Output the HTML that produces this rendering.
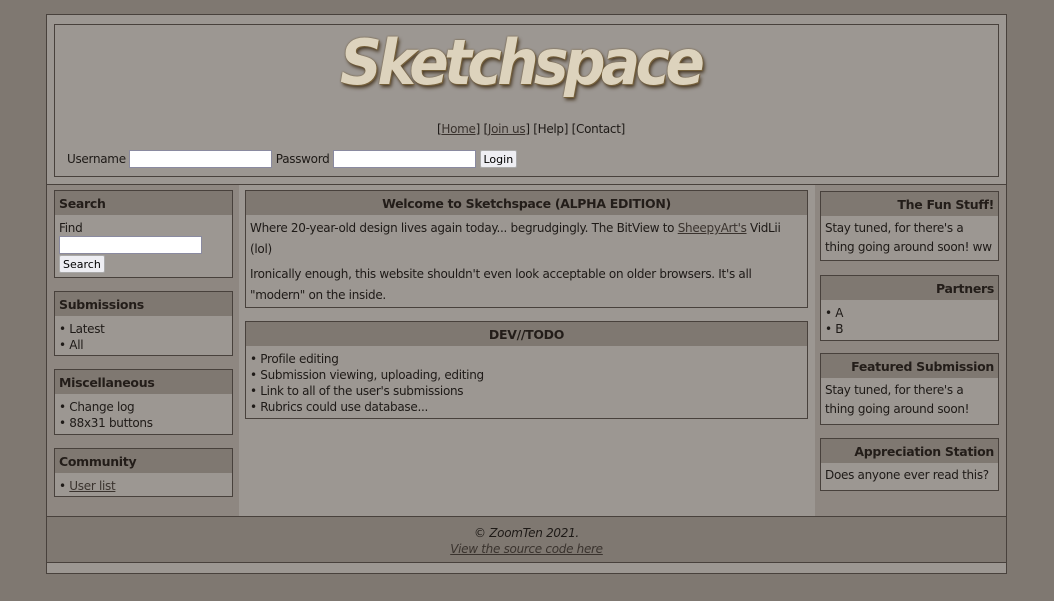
<!DOCTYPE html><html><head><style>
*{margin:0;padding:0;box-sizing:border-box}
body{width:1054px;height:601px;background:#7f7871;font-family:"DejaVu Sans","Liberation Sans",sans-serif;font-size:12px;color:#1e1a17;position:relative;overflow:hidden;letter-spacing:-0.3px}
.a{position:absolute}
.box{position:absolute;border:1px solid #48413c;background:#9c9792}
.t{background:#7f7871;height:24px;line-height:26px;font-weight:bold;font-size:12.5px;padding:0 4px;letter-spacing:-0.3px;color:#231d19}
.r .t{text-align:right}
.c{padding:5px 4px 3px;line-height:16px}
ul{list-style:none}
li:before{content:"• "}
a{color:#3a332e}
input{border:1px solid #8a8aa0;background:#fff;height:18px}
button{border:1px solid #aaa;border-radius:2px;background:#eeeef3;font-size:11px;height:18px;padding:0 3px;font-family:inherit}
</style></head><body>
<div class="a" style="left:46px;top:14px;width:961px;height:560px;border:1px solid #48413c;background:#9c9792"></div>
<div class="a" style="left:47px;top:184px;width:192px;height:332px;background:#8e8781;border-top:1px solid #48413c"></div>
<div class="a" style="left:815px;top:184px;width:191px;height:332px;background:#8e8781;border-top:1px solid #48413c"></div>
<div class="a" style="left:239px;top:184px;width:576px;height:332px;background:#9c9792;border-top:1px solid #48413c"></div>
<div class="a" style="left:47px;top:516px;width:959px;height:47px;background:#7f7871;border-top:1px solid #48413c;border-bottom:1px solid #48413c;text-align:center;font-style:italic;line-height:16px;padding-top:8px">© ZoomTen 2021.<br><a href="#">View the source code here</a></div>
<div class="a" style="left:54px;top:24px;width:945px;height:153px;border:1px solid #48413c;background:#9c9792"></div>
<div class="a" style="left:340px;top:26px;font:italic bold 62px 'DejaVu Sans',sans-serif;letter-spacing:-5px;color:#ddd3bd;text-shadow:0 0 2px #6a5530,1px 1px 0 #7a6540,2px 3px 4px #4a3a25;white-space:nowrap;transform:scaleX(0.94);transform-origin:0 0">Sketchspace</div>
<div class="a" style="left:0;top:122px;width:1062px;text-align:center">[<a href="#">Home</a>] [<a href="#">Join us</a>] [Help] [Contact]</div>
<div class="a" style="left:67px;top:150px;line-height:18px">Username <input style="width:143px;vertical-align:top"> Password <input style="width:143px;vertical-align:top"> <button style="vertical-align:top">Login</button></div>

<div class="box" style="left:54px;top:190px;width:179px;height:88px"><div class="t">Search</div><div class="c">Find<br><input style="width:143px;height:18px"><br><button style="margin-top:1px">Search</button></div></div>
<div class="box" style="left:54px;top:291px;width:179px;height:65px"><div class="t">Submissions</div><div class="c"><ul><li>Latest</li><li>All</li></ul></div></div>
<div class="box" style="left:54px;top:369px;width:179px;height:66px"><div class="t">Miscellaneous</div><div class="c"><ul><li>Change log</li><li>88x31 buttons</li></ul></div></div>
<div class="box" style="left:54px;top:448px;width:179px;height:49px"><div class="t">Community</div><div class="c"><ul><li><a href="#">User list</a></li></ul></div></div>

<div class="box" style="left:245px;top:190px;width:563px;height:118px"><div class="t" style="text-align:center">Welcome to Sketchspace (ALPHA EDITION)</div><div class="c" style="line-height:21px;padding-top:3px">Where 20-year-old design lives again today... begrudgingly. The BitView to <a href="#">SheepyArt's</a> VidLii (lol)<div style="margin-top:4px">Ironically enough, this website shouldn't even look acceptable on older browsers. It's all "modern" on the inside.</div></div></div>
<div class="box" style="left:245px;top:321px;width:563px;height:98px"><div class="t" style="text-align:center">DEV//TODO</div><div class="c"><ul><li>Profile editing</li><li>Submission viewing, uploading, editing</li><li>Link to all of the user's submissions</li><li>Rubrics could use database...</li></ul></div></div>

<div class="box r" style="left:820px;top:191px;width:179px;height:70px"><div class="t">The Fun Stuff!</div><div class="c" style="line-height:19px;padding-top:3px">Stay tuned, for there's a thing going around soon! ww</div></div>
<div class="box r" style="left:820px;top:275px;width:179px;height:66px"><div class="t">Partners</div><div class="c"><ul><li>A</li><li>B</li></ul></div></div>
<div class="box r" style="left:820px;top:353px;width:179px;height:72px"><div class="t">Featured Submission</div><div class="c" style="line-height:19px;padding-top:3px">Stay tuned, for there's a thing going around soon!</div></div>
<div class="box r" style="left:820px;top:438px;width:179px;height:53px"><div class="t">Appreciation Station</div><div class="c" style="line-height:19px;padding-top:3px">Does anyone ever read this?</div></div>
</body></html>
